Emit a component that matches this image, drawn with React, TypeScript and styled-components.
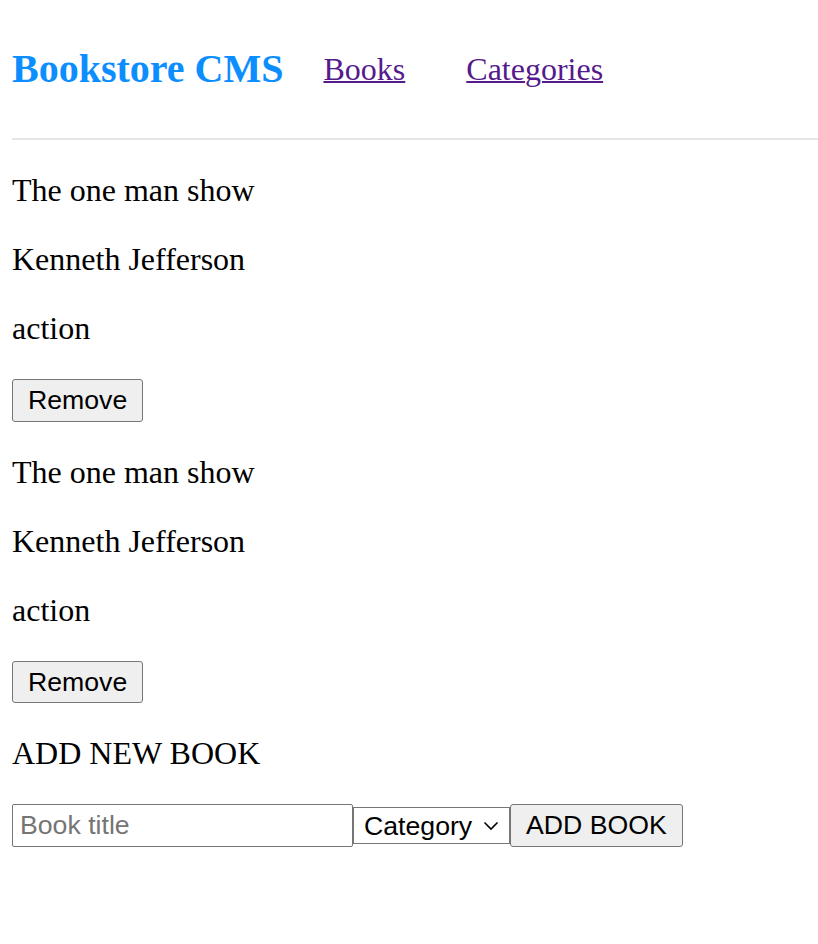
import React from "react";
import styled, { createGlobalStyle } from "styled-components";

const GlobalStyle = createGlobalStyle`
  html, body {
    margin: 0;
    padding: 0;
    background: #ffffff;
  }
  body {
    font-family: "Liberation Serif", "Times New Roman", serif;
    font-size: 32px;
    color: #000000;
  }
`;

const Page = styled.div`
  padding-left: 12px;
`;

const Header = styled.header`
  display: flex;
  align-items: center;
  gap: 40px;
  height: 138px;
  border-bottom: 2px solid #e6e6e6;
`;

const Brand = styled.h1`
  margin: 0;
  font-family: "Liberation Serif", "Times New Roman", serif;
  font-size: 40px;
  line-height: 46px;
  font-weight: 700;
  color: #0d8eff;
`;

const Nav = styled.nav`
  display: flex;
  align-items: center;
  gap: 61px;
`;

const NavLink = styled.a`
  font-size: 32px;
  line-height: 37px;
  color: #551a8b;
  text-decoration: underline;
  text-decoration-thickness: 2px;
`;

const BookList = styled.div``;

const BookItem = styled.div``;

const Text = styled.p`
  margin: 32px 0;
  font-size: 32px;
  line-height: 37px;
`;

const Actions = styled.div`
  display: flex;
`;

const Button = styled.button`
  font-family: "Liberation Sans", Arial, sans-serif;
  font-size: 26.67px;
  line-height: 30.5px;
  padding: 5px 15px;
  border: 1px solid #767676;
  border-radius: 3px;
  background: #efefef;
  color: #000000;
  cursor: pointer;
`;

const Form = styled.form`
  display: flex;
  align-items: center;
`;

const TitleInput = styled.input`
  box-sizing: border-box;
  width: 341px;
  height: 43px;
  font-family: "Liberation Sans", Arial, sans-serif;
  font-size: 26.67px;
  padding: 4px 7px;
  border: 1px solid #767676;
  border-radius: 2px;
  color: #000000;
  &::placeholder {
    color: #757575;
  }
`;

const SelectWrap = styled.div`
  position: relative;
  display: flex;
`;

const Select = styled.select`
  appearance: none;
  box-sizing: border-box;
  width: 157px;
  height: 37px;
  font-family: "Liberation Sans", Arial, sans-serif;
  font-size: 26.67px;
  padding: 0 30px 0 10px;
  border: 1px solid #767676;
  border-radius: 0;
  background: #ffffff;
  color: #000000;
`;

const Chevron = styled.svg`
  position: absolute;
  right: 11px;
  top: 50%;
  transform: translateY(-50%);
  pointer-events: none;
`;

export default function App() {
  const books = [
    { id: 1, title: "The one man show", author: "Kenneth Jefferson", category: "action" },
    { id: 2, title: "The one man show", author: "Kenneth Jefferson", category: "action" },
  ];
  return (
    <>
      <GlobalStyle />
      <Page>
        <Header>
          <Brand>Bookstore CMS</Brand>
          <Nav>
            <NavLink href="#books">Books</NavLink>
            <NavLink href="#categories">Categories</NavLink>
          </Nav>
        </Header>
        <BookList>
          {books.map((b) => (
            <BookItem key={b.id}>
              <Text>{b.title}</Text>
              <Text>{b.author}</Text>
              <Text>{b.category}</Text>
              <Actions>
                <Button type="button">Remove</Button>
              </Actions>
            </BookItem>
          ))}
        </BookList>
        <Text>ADD NEW BOOK</Text>
        <Form onSubmit={(e) => e.preventDefault()}>
          <TitleInput type="text" placeholder="Book title" />
          <SelectWrap>
            <Select defaultValue="">
              <option value="">Category</option>
              <option value="action">action</option>
            </Select>
            <Chevron width="16" height="10" viewBox="0 0 16 10">
              <path d="M1.5 1.5 L8 8 L14.5 1.5" fill="none" stroke="#000" strokeWidth="1.6" />
            </Chevron>
          </SelectWrap>
          <Button type="submit">ADD BOOK</Button>
        </Form>
      </Page>
    </>
  );
}
